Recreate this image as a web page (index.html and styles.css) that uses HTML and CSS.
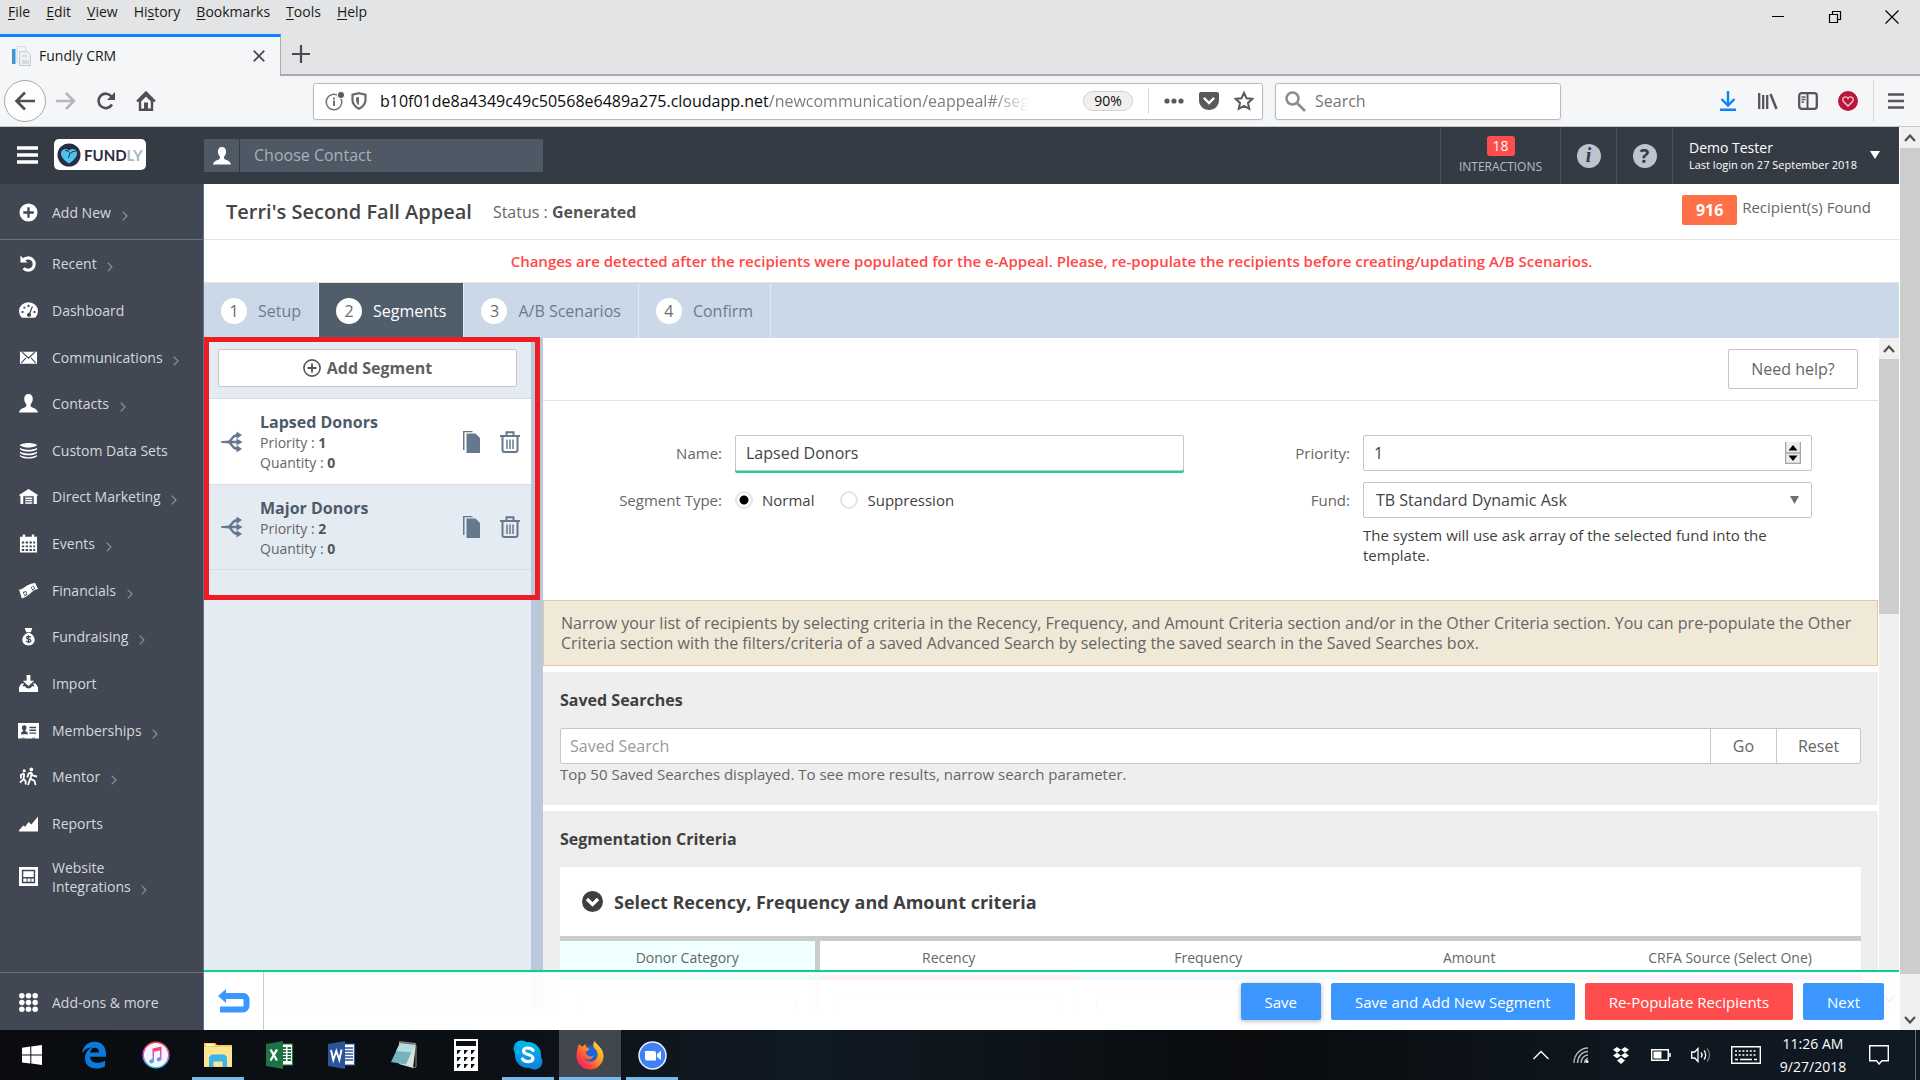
FILE: index.html
```html
<!DOCTYPE html>
<html lang="en">
<head>
<meta charset="utf-8">
<title>Fundly CRM</title>
<meta name="viewport" content="width=device-width, initial-scale=1">
<link rel="stylesheet" href="styles.css">
</head>
<body>
<svg class="sprite" aria-hidden="true">
  <symbol id="i-person" viewBox="0 0 20 20"><path d="M10 0c3 0 4.500 2.200 4.500 5 0 2.600-1 4.300-2 5.600-.4.600-.4 2.200.3 2.800 1.500 1.300 6.200 1.400 7.200 6.100H0c1-4.700 5.700-4.800 7.200-6.100.7-.6.7-2.200.3-2.800-1-1.300-2-3-2-5.600 0-2.800 1.500-5 4.500-5z"/></symbol>
  <symbol id="i-plus-circle" viewBox="0 0 20 20"><path fill-rule="evenodd" d="M10 .5a9.500 9.500 0 1 1 0 19 9.500 9.500 0 0 1 0-19zM8.800 4.500v4.300H4.500v2.400h4.300v4.300h2.400v-4.300h4.300V8.800h-4.300V4.500z"/></symbol>
  <symbol id="i-recent" viewBox="0 0 20 20"><path d="M1.500 1.500v7.500H9z"/><path d="M4.500 6.500a6.500 6.500 0 1 1 .3 8.500" fill="none" stroke="currentColor" stroke-width="3.200"/></symbol>
  <symbol id="i-gauge" viewBox="0 0 20 20"><path fill-rule="evenodd" d="M3 17.500A10 9.500 0 1 1 17 17.500zM9 4v2.200h2V4zM4.700 6v2h2V6zM2.700 10.500v2h2v-2zM15.300 10.500v2h2v-2zM13.500 5.500l-2.700 6.800a2.200 2.200 0 1 0 1.200.5l2.700-6.800z"/></symbol>
  <symbol id="i-mail" viewBox="0 0 20 20"><path fill-rule="evenodd" d="M1 4h18v12.500H1zM2.800 4.800l7.200 6.700 7.200-6.700-.8-.8L10 9.800 3.600 4zM2 15.300l.8.8 5-5.300-.8-.8zM18 15.300l-.8.8-5-5.300.8-.8z"/></symbol>
  <symbol id="i-layers" viewBox="0 0 20 20"><path d="M10 2c4 0 9 1.300 9 2.200S14 7 10 7 1 5.200 1 4.200 6 2 10 2z"/><path d="M1 7c5 3 13 3 18 0v1.700c-3 3.300-15 3.300-18 0zM1 11c5 3 13 3 18 0v1.500c-3 3.300-15 3.300-18 0zM1 14.800c5 3 13 3 18 0V16c-3 3.300-15 3.300-18 0z"/></symbol>
  <symbol id="i-house" viewBox="0 0 20 20"><path fill-rule="evenodd" d="M10 2l10 6.500-1.200 1.200V18H15.500V9.800H4.500V18H1.500V9.700L0 8.500z"/><path d="M6.500 11h7.500v1.500H6.500zM6.500 13.500h7.500V15H6.500zM6.500 16h7.500v1.500H6.500z"/></symbol>
  <symbol id="i-calendar" viewBox="0 0 20 20"><path fill-rule="evenodd" d="M1 3h3V.5h2.500V3h7V.5H16V3h3v16.500H1zM3 8v2h2.500V8zM7 8v2h2.500V8zM11 8v2h2.500V8zM15 8v2h2V8zM3 12v2h2.500v-2zM7 12v2h2.500v-2zM11 12v2h2.500v-2zM15 12v2h2v-2zM3 15.800v2h2.500v-2zM7 15.800v2h2.500v-2zM11 15.800v2h2.500v-2zM15 15.800v2h2v-2z"/></symbol>
  <symbol id="i-cash" viewBox="0 0 20 20"><path fill-rule="evenodd" d="M0 9c5 0 7-6 17-7l3 6.500c-7 1-9 8-17 10zM4 11.500l2 4.500 3-1.800-1.500-3.800zM12.500 6.500L14 10l3-2-1.500-3z"/><circle cx="6.500" cy="13.200" r="1.300"/><circle cx="14.700" cy="7.300" r="1.200"/></symbol>
  <symbol id="i-moneybag" viewBox="0 0 20 20"><path d="M6 1h8l-1.500 4.500h-5zM10 6c4 1 6.500 4 6.500 7.500s-2.500 6-6.500 6-6.500-2.500-6.500-6S6 7 10 6z"/><path d="M12.500 10.800c-1-1.300-4.600-1.200-4.600.6s4.600 1 4.600 2.900-3.600 2-5 .3M10 8.800v8.400" fill="none" stroke="#414753" stroke-width="1.300"/></symbol>
  <symbol id="i-import" viewBox="0 0 20 20"><path d="M8 1h4v6h4l-6 5.500L4 7h4zM2.500 10h3l-2 3h3c.5 3 6.500 3 7 0h3l-2-3h3l2.500 4v5H0v-5z"/></symbol>
  <symbol id="i-idcard" viewBox="0 0 22 20"><path fill-rule="evenodd" d="M0 2h22v16.500H0zM12 6v1.500h7V6zM12 9v1.500h7V9zM12 12v1.500h7V12z"/><path fill="#414753" d="M6.500 4.500c3 0 3 4 1 5.500 0 1.500 3 1 3 4H3c0-3 2.500-2.500 2.500-4-2-1.500-2-5.500 1-5.500zM4 17.500h3v1H4zM15 17.500h3v1h-3z"/></symbol>
  <symbol id="i-runners" viewBox="0 0 20 20"><circle cx="13" cy="2.500" r="2"/><circle cx="5.500" cy="4" r="1.600"/><path d="M13 5.500l-3 1.500-1.200 4M13 6l1.500 3 4.500 1M13 7l-.8 5.500 4 2 1.300 4.500M12 12l-2.500 7M5.500 6.500L2 8.500v3.500M5.500 7l-.7 5.500L7 15v3.500M5 12.500l-4 4" fill="none" stroke="currentColor" stroke-width="1.900"/></symbol>
  <symbol id="i-chart" viewBox="0 0 20 20"><path d="M0 18.500V17l4.500-5 2 1.500 3.500-5 3 2.500L20 2.500v16z"/></symbol>
  <symbol id="i-website" viewBox="0 0 20 20"><path fill-rule="evenodd" d="M0 0h20v20H0zM3 3v14h14V3z"/><path d="M4.500 4.500h11v6h-11zM4.500 12H8v3.500H4.500zM9 12h3v3.500H9zM13 12h2.500v3.500H13z"/></symbol>
  <symbol id="i-grid" viewBox="0 0 20 20"><circle cx="3" cy="3" r="2.900"/><circle cx="10" cy="3" r="2.900"/><circle cx="17" cy="3" r="2.900"/><circle cx="3" cy="10" r="2.900"/><circle cx="10" cy="10" r="2.900"/><circle cx="17" cy="10" r="2.900"/><circle cx="3" cy="17" r="2.900"/><circle cx="10" cy="17" r="2.900"/><circle cx="17" cy="17" r="2.900"/></symbol>
  <symbol id="i-split" viewBox="0 0 22 22"><path d="M0 10.200l8-.7C11 5.500 12 3.800 15.500 3V.500L21 4l-5.500 4V5.700c-2.300.3-3 2-4.700 4h4.700V7.500L21.500 11l-6 3.500v-2.300h-4.700c1.700 2 2.400 3.700 4.700 4V14l5.500 4-5.500 3.500V19C12 18.200 11 16.500 8 12.500l-8-.7z"/></symbol>
  <symbol id="i-copy" viewBox="0 0 18 22"><path d="M0 0h9.500v1.200H1.500V19H0z"/><path d="M3.500 2.500h9L17 7v15H3.500z"/></symbol>
  <symbol id="i-trash" viewBox="0 0 20 22"><path d="M0 5h20M6.500 5V1.200h7V5M2.500 5v14c0 1.200.8 2 2 2h11c1.200 0 2-.8 2-2V5" fill="none" stroke="currentColor" stroke-width="2"/><path d="M7 8.500V18M10 8.500V18M13 8.500V18" stroke="currentColor" stroke-width="1.500"/></symbol>
  <symbol id="i-up" viewBox="0 0 12 8"><path d="M1 7l5-5.500L11 7" fill="none" stroke="#505050" stroke-width="2.200"/></symbol>
  <symbol id="i-down" viewBox="0 0 12 8"><path d="M1 1l5 5.500L11 1" fill="none" stroke="#505050" stroke-width="2.200"/></symbol>
  <symbol id="i-chev" viewBox="0 0 6 10"><path d="M.7.700L5 5 .7 9.300" fill="none" stroke="currentColor" stroke-width="1.200"/></symbol>
</svg>

<header class="browser">
  <div class="menubar">
    <nav class="menus" aria-label="Menu bar">
      <a href="#"><u>F</u>ile</a><a href="#"><u>E</u>dit</a><a href="#"><u>V</u>iew</a><a href="#">Hi<u>s</u>tory</a><a href="#"><u>B</u>ookmarks</a><a href="#"><u>T</u>ools</a><a href="#"><u>H</u>elp</a>
    </nav>
    <div class="winbtns">
      <button type="button" aria-label="Minimize"><svg width="14" height="14" viewBox="0 0 14 14"><path d="M1 6.500h12" stroke="#000"/></svg></button>
      <button type="button" aria-label="Restore"><svg width="14" height="14" viewBox="0 0 14 14"><path d="M1.500 4.500h8v8h-8zM4.500 4.500v-3h8v8h-3" fill="none" stroke="#000" stroke-width="1.200"/></svg></button>
      <button type="button" aria-label="Close"><svg width="14" height="14" viewBox="0 0 14 14"><path d="M.5.500l13 13M13.500.500l-13 13" stroke="#000" stroke-width="1.200"/></svg></button>
    </div>
  </div>
  <div class="tabstrip">
    <div class="tab">
      <svg width="20" height="20" viewBox="0 0 20 20"><path d="M6 .500h9v16H6z" fill="#f3f5f7" stroke="#d3d9de"/><path d="M1 3h3.500v15H1z" fill="#3b96d2"/><path d="M8.500 5.500H16l3.500 3v11h-11z" fill="#eef1f4" stroke="#c3cad2"/><path d="M11 9h5v2h-5zM11 14h7v4h-7z" fill="#d3dae1"/></svg>
      <span class="tab-title">Fundly CRM</span>
      <button type="button" aria-label="Close tab"><svg width="12" height="12" viewBox="0 0 12 12"><path d="M.7.700l10.600 10.600M11.300.700L.7 11.300" stroke="#4a4a4f" stroke-width="1.700"/></svg></button>
    </div>
    <button class="newtab" type="button" aria-label="New tab"><svg width="18" height="18" viewBox="0 0 18 18"><path d="M9 0v18M0 9h18" stroke="#4a4a4f" stroke-width="2.200"/></svg></button>
  </div>
  <div class="navbar">
    <div class="navbtns">
      <button class="back" type="button" aria-label="Back"><svg width="22" height="20" viewBox="0 0 22 20"><path d="M11 1.500L2.500 10l8.500 8.500M2.500 10H21" fill="none" stroke="#4f5054" stroke-width="2.600"/></svg></button>
      <button type="button" aria-label="Forward"><svg width="20" height="18" viewBox="0 0 20 18"><path d="M10 1l8 8-8 8M18 9H0" fill="none" stroke="#b4b6ba" stroke-width="2.600"/></svg></button>
      <button type="button" aria-label="Reload"><svg width="20" height="20" viewBox="0 0 20 20"><path d="M16 13.500A7.200 7.200 0 1 1 15.500 5.500" fill="none" stroke="#4f5054" stroke-width="2.600"/><path d="M19 1v8h-8z" fill="#4f5054"/></svg></button>
      <button type="button" aria-label="Home"><svg width="20" height="20" viewBox="0 0 20 20"><path d="M1 10.500L10 1.500l9 9" fill="none" stroke="#4f5054" stroke-width="2.400"/><path d="M4 10v8.700h12V10l-6-6z" fill="none" stroke="#4f5054" stroke-width="2.400"/><path d="M8 11.500h4V18H8z" fill="#4f5054"/></svg></button>
    </div>
    <div class="urlbar">
      <svg width="20" height="20" viewBox="0 0 20 20"><circle cx="9" cy="11" r="7.800" fill="none" stroke="#737373" stroke-width="1.500"/><path d="M8 9.500h2V15H8zM8 6.500h2v2H8z" fill="#737373"/><circle cx="16" cy="4" r="3.600" fill="#5c5c5c" stroke="#fff"/></svg>
      <svg class="shield" width="16" height="18" viewBox="0 0 16 18"><path d="M8 1.200l6.500 1.500v5c0 4-2.500 7-6.500 9-4-2-6.500-5-6.500-9v-5z" fill="none" stroke="#6a6a6a" stroke-width="2.200"/><path d="M8 5v8.500c-2-1.300-3-3.500-3-6V5.500z" fill="#6a6a6a"/></svg>
      <span class="url">b10f01de8a4349c49c50568e6489a275.cloudapp.net<span class="path">/newcommunication/eappeal#/seg</span></span>
      <span class="zoom">90%</span>
      <span class="sep"></span>
      <svg width="20" height="6" viewBox="0 0 20 6"><g fill="#5a5a5c"><circle cx="3" cy="3" r="2.600"/><circle cx="10" cy="3" r="2.600"/><circle cx="17" cy="3" r="2.600"/></g></svg>
      <svg width="20" height="18" viewBox="0 0 20 18"><path d="M2 0h16a2 2 0 0 1 2 2v6c0 6-4.500 10-10 10S0 14 0 8V2a2 2 0 0 1 2-2z" fill="#5a5a5c"/><path d="M5.500 6.500L10 11l4.500-4.500" fill="none" stroke="#fff" stroke-width="2.400" stroke-linecap="round"/></svg>
      <svg width="20" height="20" viewBox="0 0 20 20"><path d="M10 1.800l2.500 5.400 5.900.7-4.400 4 1.200 5.900L10 14.900l-5.200 2.900L6 11.900l-4.400-4 5.900-.7z" fill="none" stroke="#5a5a5c" stroke-width="2"/></svg>
    </div>
    <label class="searchbar">
      <svg width="21" height="21" viewBox="0 0 21 21"><circle cx="7.500" cy="7.500" r="6" fill="none" stroke="#8c8c8c" stroke-width="2.500"/><path d="M12 12l8 8" stroke="#8c8c8c" stroke-width="2.700"/></svg>
      <input type="search" placeholder="Search" aria-label="Search the web">
    </label>
    <div class="tools">
      <svg width="20" height="20" viewBox="-2 0 20 20"><path d="M8 0v14M1.500 8L8 14.500 14.500 8M0 18.700h16" fill="none" stroke="#0a84ff" stroke-width="2.400"/></svg>
      <svg width="20" height="18" viewBox="0 0 20 18"><path d="M1.200 1v16M5.200 3v14M9.200 3v14" stroke="#55565a" stroke-width="2.300"/><path d="M12.500 2l6 15" stroke="#55565a" stroke-width="2.500"/></svg>
      <svg width="20" height="18" viewBox="0 0 20 18"><rect x="1.200" y="1.200" width="17.600" height="15.600" rx="2.500" fill="none" stroke="#55565a" stroke-width="2.300"/><path d="M9.500 1v16" stroke="#55565a" stroke-width="2"/><path d="M3.500 5h4M3.500 7.500h4M3.500 10h2.500" stroke="#55565a" stroke-width="1.300"/></svg>
      <svg width="20" height="20" viewBox="0 0 20 20"><circle cx="10" cy="10" r="10" fill="#b9163c"/><path d="M10 15L5.500 10.500C3.800 8.500 5.200 5.900 7.500 5.900c1.200 0 2 .6 2.500 1.600.5-1 1.300-1.600 2.500-1.600 2.300 0 3.700 2.600 2 4.600z" fill="none" stroke="#f6c9d3" stroke-width="1.400"/></svg>
      <span class="sep"></span>
      <svg width="16" height="16" viewBox="0 0 16 16"><path d="M0 1.500h16M0 8h16M0 14.500h16" stroke="#55565a" stroke-width="2.400"/></svg>
    </div>
  </div>
</header>

<div class="viewport">
<div class="app">
  <header class="topbar">
    <div class="brand">
      <button type="button" aria-label="Toggle menu"><svg width="21" height="18" viewBox="0 0 21 18"><path d="M0 2h21M0 9h21M0 16h21" stroke="#fff" stroke-width="3.600"/></svg></button>
      <a class="logo" href="#"><svg width="24" height="24" viewBox="0 0 24 24"><circle cx="12" cy="12" r="11.500" fill="#2a2d42"/><path d="M12 20.500C7.500 17.500 4 14.200 4 10.200c0-4 5-5.800 8-2.700 3-3.100 8-1.300 8 2.700 0 4-3.500 7.300-8 10.300z" fill="#4cc3e8"/><path d="M18.500 8.500c-3.500-.5-6.500 2-7 6.500M8 7.500c3 0 4.500 1.500 5 3" fill="none" stroke="#2a2d42" stroke-width="1"/></svg><span>FUND<i>LY</i></span></a>
    </div>
    <div class="contact">
      <span class="contact-icon"><svg width="18" height="18"><use href="#i-person"/></svg></span>
      <input type="text" placeholder="Choose Contact" aria-label="Choose Contact">
    </div>
    <div class="account">
      <a class="interactions" href="#"><b>18</b>INTERACTIONS</a>
      <a class="round" href="#" aria-label="Information"><span class="ital">i</span></a>
      <a class="round" href="#" aria-label="Help"><span>?</span></a>
      <button class="user" type="button"><span><span class="who">Demo Tester</span><span class="login">Last login on 27 September 2018</span></span><svg width="10" height="8" viewBox="0 0 10 8"><path d="M0 0h10L5 8z" fill="#fff"/></svg></button>
    </div>
  </header>

  <div class="body">
    <aside class="sidebar">
      <a class="side first" href="#"><svg><use href="#i-plus-circle"/></svg><span>Add New <svg class="chev"><use href="#i-chev"/></svg></span></a>
      <nav class="sidenav" aria-label="Main">
        <a class="side" href="#"><svg><use href="#i-recent"/></svg><span>Recent <svg class="chev"><use href="#i-chev"/></svg></span></a>
        <a class="side" href="#"><svg><use href="#i-gauge"/></svg><span>Dashboard</span></a>
        <a class="side" href="#"><svg><use href="#i-mail"/></svg><span>Communications <svg class="chev"><use href="#i-chev"/></svg></span></a>
        <a class="side" href="#"><svg><use href="#i-person"/></svg><span>Contacts <svg class="chev"><use href="#i-chev"/></svg></span></a>
        <a class="side" href="#"><svg><use href="#i-layers"/></svg><span>Custom Data Sets</span></a>
        <a class="side" href="#"><svg><use href="#i-house"/></svg><span>Direct Marketing <svg class="chev"><use href="#i-chev"/></svg></span></a>
        <a class="side" href="#"><svg><use href="#i-calendar"/></svg><span>Events <svg class="chev"><use href="#i-chev"/></svg></span></a>
        <a class="side" href="#"><svg><use href="#i-cash"/></svg><span>Financials <svg class="chev"><use href="#i-chev"/></svg></span></a>
        <a class="side" href="#"><svg><use href="#i-moneybag"/></svg><span>Fundraising <svg class="chev"><use href="#i-chev"/></svg></span></a>
        <a class="side" href="#"><svg><use href="#i-import"/></svg><span>Import</span></a>
        <a class="side" href="#"><svg><use href="#i-idcard"/></svg><span>Memberships <svg class="chev"><use href="#i-chev"/></svg></span></a>
        <a class="side" href="#"><svg><use href="#i-runners"/></svg><span>Mentor <svg class="chev"><use href="#i-chev"/></svg></span></a>
        <a class="side" href="#"><svg><use href="#i-chart"/></svg><span>Reports</span></a>
        <a class="side" href="#"><svg><use href="#i-website"/></svg><span>Website<br>Integrations <svg class="chev"><use href="#i-chev"/></svg></span></a>
      </nav>
      <a class="side addons" href="#"><svg><use href="#i-grid"/></svg><span>Add-ons &amp; more</span></a>
    </aside>

    <main class="main">
      <div class="titlebar">
        <h1>Terri's Second Fall Appeal</h1>
        <p class="status">Status : <b>Generated</b></p>
        <p class="found"><b>916</b><span>Recipient(s) Found</span></p>
      </div>
      <p class="alert">Changes are detected after the recipients were populated for the e-Appeal. Please, re-populate the recipients before creating/updating A/B Scenarios.</p>
      <nav class="steps" aria-label="Steps">
        <a href="#"><b>1</b>Setup</a>
        <a class="active" href="#"><b>2</b>Segments</a>
        <a href="#"><b>3</b>A/B Scenarios</a>
        <a href="#"><b>4</b>Confirm</a>
      </nav>

      <div class="workspace">
        <section class="segments" aria-label="Segments">
          <div class="addwrap"><button class="add" type="button"><svg width="18" height="18" viewBox="0 0 18 18"><circle cx="9" cy="9" r="8.100" fill="none" stroke="#555" stroke-width="1.600"/><path d="M9 4.500v9M4.500 9h9" stroke="#555" stroke-width="1.800"/></svg>Add Segment</button></div>
          <article class="segment current">
            <svg width="22" height="22"><use href="#i-split"/></svg>
            <div class="seginfo"><h2>Lapsed Donors</h2><p>Priority : <b>1</b></p><p>Quantity : <b>0</b></p></div>
            <button type="button" aria-label="Copy Lapsed Donors"><svg width="18" height="22"><use href="#i-copy"/></svg></button>
            <button type="button" aria-label="Delete Lapsed Donors"><svg width="20" height="22"><use href="#i-trash"/></svg></button>
          </article>
          <article class="segment">
            <svg width="22" height="22"><use href="#i-split"/></svg>
            <div class="seginfo"><h2>Major Donors</h2><p>Priority : <b>2</b></p><p>Quantity : <b>0</b></p></div>
            <button type="button" aria-label="Copy Major Donors"><svg width="18" height="22"><use href="#i-copy"/></svg></button>
            <button type="button" aria-label="Delete Major Donors"><svg width="20" height="22"><use href="#i-trash"/></svg></button>
          </article>
          <div class="callout"></div>
        </section>

        <section class="detail" aria-label="Segment details">
          <div class="helprow"><button type="button" class="plain">Need help?</button></div>
          <form class="form">
            <div class="col">
              <label for="name">Name:</label>
              <input class="field focus" id="name" type="text" value="Lapsed Donors">
              <span class="lbl" id="type">Segment Type:</span>
              <div class="radios" role="radiogroup" aria-labelledby="type">
                <label><input type="radio" name="type" checked>Normal</label>
                <label><input type="radio" name="type">Suppression</label>
              </div>
            </div>
            <div class="col">
              <label for="priority">Priority:</label>
              <div class="field number"><input id="priority" type="text" inputmode="numeric" value="1"><svg width="16" height="22" viewBox="0 0 16 22"><path d="M0 0h16v22H0z" fill="#ececec"/><path d="M15.500 0v21.500H.500M0 11h16M.500 0v22" fill="none" stroke="#a6a6a6" stroke-width="1.500"/><path d="M3.500 8.500L8 3l4.500 5.500zM3.500 13.500h9L8 19z" fill="#000"/></svg></div>
              <label for="fund">Fund:</label>
              <div class="field select"><select id="fund"><option>TB Standard Dynamic Ask</option></select><svg width="9" height="8" viewBox="0 0 9 8"><path d="M0 0h9L4.500 8z" fill="#6f6f6f"/></svg></div>
              <p class="note">The system will use ask array of the selected fund into the template.</p>
            </div>
          </form>
          <p class="banner">Narrow your list of recipients by selecting criteria in the Recency, Frequency, and Amount Criteria section and/or in the Other Criteria section. You can pre-populate the Other Criteria section with the filters/criteria of a saved Advanced Search by selecting the saved search in the Saved Searches box.</p>
          <section class="block">
            <h3>Saved Searches</h3>
            <div class="searchrow"><input type="text" placeholder="Saved Search" aria-label="Saved Search"><button type="button">Go</button><button type="button">Reset</button></div>
            <p>Top 50 Saved Searches displayed. To see more results, narrow search parameter.</p>
          </section>
          <section class="block grow">
            <h3>Segmentation Criteria</h3>
            <div class="card">
              <h4><svg width="21" height="21" viewBox="0 0 21 21"><circle cx="10.500" cy="10.500" r="10.500" fill="#3f3f3f"/><path d="M5 8l5.500 5.500L16 8" fill="none" stroke="#fff" stroke-width="3.200"/></svg>Select Recency, Frequency and Amount criteria</h4>
              <table>
                <colgroup><col class="c-donor"><col><col><col><col></colgroup>
                <thead><tr><th class="k1">Donor Category</th><th class="k2">Recency</th><th class="k3">Frequency</th><th class="k4">Amount</th><th class="k5">CRFA Source (Select One)</th></tr></thead>
                <tbody><tr><td class="k1"><input type="text" aria-label="Donor Category filter"></td><td><input type="text" aria-label="Recency filter"></td><td><input type="text" aria-label="Frequency filter"></td><td><input type="text" aria-label="Amount filter"></td><td><input type="text" aria-label="Source filter"></td></tr></tbody>
              </table>
            </div>
          </section>
        </section>

        <div class="scroll" aria-hidden="true"><span><svg width="12" height="8"><use href="#i-up"/></svg></span><i class="thumb"></i><span class="end"><svg width="12" height="8"><use href="#i-down"/></svg></span></div>
      </div>

      <footer class="actions">
        <button class="return" type="button" aria-label="Back to list"><svg width="32" height="24" viewBox="0 0 32 24"><path d="M8 7h16.500a4 4 0 0 1 4 3v7a3.500 3.500 0 0 1-3.500 3.500H2" fill="none" stroke="#3b97fe" stroke-width="6"/><path d="M0 7l8-7v14z" fill="#3b97fe"/></svg></button>
        <div class="btns">
          <button class="raised" type="button">Save</button>
          <button type="button">Save and Add New Segment</button>
          <button class="danger" type="button">Re-Populate Recipients</button>
          <button type="button">Next</button>
        </div>
      </footer>
    </main>
  </div>
</div>
<div class="scroll outer" aria-hidden="true"><span><svg width="12" height="8"><use href="#i-up"/></svg></span><i class="thumb"></i><span class="end"><svg width="12" height="8"><use href="#i-down"/></svg></span></div>
</div>

<footer class="taskbar">
  <div class="apps">
    <button type="button" aria-label="Start"><svg width="20" height="20" viewBox="0 0 20 20"><path d="M0 2.800L8.300 1.600v8H0zM9.300 1.500L20 0v9.600H9.300zM0 10.600h8.300v8L0 17.400zM9.300 10.600H20V20L9.300 18.600z" fill="#fff"/></svg></button>
    <button type="button" aria-label="Edge"><svg width="26" height="28" viewBox="0 0 26 28"><path d="M1 12.500C2 5 7 .800 13.500.800c7 0 11.500 4.500 11.500 12v3H9c.3 4 3.500 6 7.500 6 3 0 5.500-.8 7.500-2v5.500c-2 1.300-5 2.200-8.500 2.200C8.500 27.500 4 23.500 4 17c0-4.500 2.500-8.500 6.800-10.600C6 6.500 3 9 1 12.500zM9.200 11.500h8.800c0-3-1.300-4.800-4.200-4.800-2.600 0-4.200 2-4.600 4.800z" fill="#0a7bdc"/></svg></button>
    <button type="button" aria-label="iTunes"><svg width="28" height="28" viewBox="0 0 28 28"><defs><linearGradient id="it" x1="0" y1="0" x2="0" y2="1"><stop offset="0" stop-color="#fb3f4e"/><stop offset=".5" stop-color="#c45bdb"/><stop offset="1" stop-color="#35c1f1"/></linearGradient></defs><circle cx="14" cy="14" r="12.800" fill="#f7f5fa" stroke="url(#it)" stroke-width="1.600"/><path d="M10.500 7.500l9-2v12.300c0 3.200-4.800 3.600-4.800.7 0-2 2-2.400 3.300-2.600V9.500l-6 1.300v9c0 3.200-4.800 3.600-4.800.7 0-2 2-2.400 3.300-2.600z" fill="url(#it)"/></svg></button>
    <button class="open" type="button" aria-label="File Explorer"><svg width="28" height="26" viewBox="0 0 28 26"><path d="M0 1h11l2 2h15v22H0z" fill="#f7cf57"/><path d="M0 5h28v19.500H0z" fill="#fde596"/><path d="M2 2h8v2H2z" fill="#fff4cc"/><path d="M5 25V15l2.500-2.500h13L23 15v10h-4.500v-5.500h-9V25z" fill="#3db5e6"/></svg></button>
    <button type="button" aria-label="Excel"><svg width="28" height="28" viewBox="0 0 28 28"><path d="M15 3h11.500v21H15z" fill="#fff" stroke="#1f7244" stroke-width="1.200"/><path d="M17 7h3M21.500 7H25M17 10h3M21.500 10H25M17 13h3M21.500 13H25M17 16h3M21.500 16H25M17 19h3M21.500 19H25" stroke="#1f7244" stroke-width="1.800"/><path d="M0 3L17 0v28L0 25z" fill="#1f7244"/><path d="M4.500 8.500l6.500 11M11 8.500l-6.500 11" stroke="#fff" stroke-width="2.200"/></svg></button>
    <button type="button" aria-label="Word"><svg width="28" height="28" viewBox="0 0 28 28"><path d="M15 3h11.500v21H15z" fill="#fff" stroke="#2a5699" stroke-width="1.200"/><path d="M17 7h8M17 10h8M17 13h8M17 16h8M17 19h8" stroke="#2a5699" stroke-width="1.600"/><path d="M0 3L17 0v28L0 25z" fill="#2a5699"/><path d="M3 9l2.300 10L8.300 10l3 9 2.300-10.500" fill="none" stroke="#fff" stroke-width="1.900"/></svg></button>
    <button type="button" aria-label="Notepad"><svg width="28" height="28" viewBox="0 0 28 28"><path d="M9 1l17 2-3 24-14-4z" fill="#d8e2e4"/><path d="M10 2l15 1.500-9 20L1 21z" fill="#75b4bf"/><path d="M10 2l15 1.500-3 8L6 10z" fill="#b5dce0"/><path d="M9 1l17 2" stroke="#777" stroke-width="2"/><path d="M26 4v22l-4 1" fill="none" stroke="#a88c58"/></svg></button>
    <button type="button" aria-label="Calculator"><svg width="24" height="32" viewBox="0 0 24 32"><path d="M0 0h24v32H0z" fill="#fff"/><path d="M2 2h20v5H2zM3 11h4l-3 4H3zM10 11h4l-3 4h-1zM17 11h4l-3 4h-1zM3 18h4l-3 4H3zM10 18h4l-3 4h-1zM17 18h4l-3 4h-1zM3 25h4l-3 4H3zM10 25h4l-3 4h-1zM17 25h4l-3 4h-1z" fill="#0c1015"/></svg></button>
    <button class="open" type="button" aria-label="Skype"><svg width="30" height="30" viewBox="0 0 30 30"><defs><linearGradient id="sk" x1="0" y1="0" x2="0" y2="1"><stop offset="0" stop-color="#00b9f2"/><stop offset="1" stop-color="#0a84dd"/></linearGradient></defs><circle cx="8.500" cy="8.500" r="8" fill="url(#sk)"/><circle cx="21.500" cy="21.500" r="8" fill="#0a84dd"/><circle cx="15" cy="15" r="13" fill="url(#sk)"/><path d="M20 10.300c-2-3-9.500-3.300-9.500.7 0 4.500 9.500 2.500 9.500 7.300 0 4.400-8.500 4.200-10.500.7" fill="none" stroke="#fff" stroke-width="3.200" stroke-linecap="round"/></svg></button>
    <button class="open on" type="button" aria-label="Firefox"><svg width="28" height="29" viewBox="0 0 28 29"><defs><linearGradient id="fx" x1="1" y1="0" x2="0" y2="1"><stop offset="0" stop-color="#fff04a"/><stop offset=".4" stop-color="#ff9a1a"/><stop offset=".75" stop-color="#ff3647"/><stop offset="1" stop-color="#e31587"/></linearGradient></defs><circle cx="14" cy="14" r="9.500" fill="#1f62d8"/><path d="M3 3c1 1 2 2 3.500 2.500L9.500 3c0 2 1 4 4 5-1 1.500-3 2-4 3 1 4 4 5.500 8 3.500-1 4-6.500 5.500-10 2 2 5 11 6 13.500 0 2-5-1-7.500-2.500-9C16.500 5 17 2.500 18.500 0c1.500 3 9 7 9 15 0 7.500-6 13.500-13.500 13.500S.500 22.500.500 15C.500 10.500 1.500 6.500 3 3z" fill="url(#fx)"/></svg></button>
    <button class="open" type="button" aria-label="Zoom"><svg width="29" height="29" viewBox="0 0 29 29"><circle cx="14.500" cy="14.500" r="13.500" fill="#3f80f7" stroke="#eaf2ff" stroke-width="1.500"/><path d="M7 10h9a2 2 0 0 1 2 2v7.500H9a2 2 0 0 1-2-2zM19 13l4-3v9l-4-3z" fill="#fff"/></svg></button>
  </div>
  <div class="tray">
    <svg width="16" height="10" viewBox="0 0 16 10"><path d="M.5 9L8 1.500 15.500 9" fill="none" stroke="#fff" stroke-width="1.400"/></svg>
    <svg width="16" height="16" viewBox="0 0 16 16"><g fill="none" stroke="#b9bdc2" stroke-width="1.300"><path d="M1 16C1 8 7 1 15 1M4.500 16C4.500 10 9 4.500 15 4.500M8 16c0-4 3-8 7-8M11.500 16c0-2 1.500-4.500 3.500-4.500"/></g><circle cx="14" cy="14.500" r="1.500" fill="#fff"/></svg>
    <svg width="18" height="17" viewBox="0 0 18 17"><path d="M5 0l4 2.800-4 2.900L1 2.800zM13 0l4 2.800-4 2.900-4-2.900zM5 5.700l4 2.800-4 2.800-4-2.800zM13 5.700l4 2.800-4 2.800-4-2.800zM9 10.500l4 2.900L9 17l-4-3.600z" fill="#fff"/></svg>
    <svg width="20" height="12" viewBox="0 0 20 12"><path d="M.700.700h16.600v10.600H.700zM19 4v4" fill="none" stroke="#fff" stroke-width="1.500"/><path d="M2.500 2.500h8v7h-8z" fill="#fff"/></svg>
    <svg width="20" height="16" viewBox="0 0 20 16"><path d="M.7 5h3L7 1.500v13L3.700 11h-3z" fill="none" stroke="#fff" stroke-width="1.300"/><path d="M10 5.500c1.300 1.500 1.300 3.500 0 5M13 3.500c2.200 2.500 2.200 6.500 0 9" fill="none" stroke="#fff" stroke-width="1.300"/><path d="M16 1.500c3.300 3.500 3.300 9.500 0 13" fill="none" stroke="#777" stroke-width="1.300"/></svg>
    <svg width="30" height="18" viewBox="0 0 30 18"><path d="M.7.700h28.600v16.600H.700z" fill="none" stroke="#fff" stroke-width="1.400"/><path d="M4 5h22M4 9h22" stroke="#fff" stroke-width="1.600" stroke-dasharray="2 1.700"/><path d="M4 13.500h3M9 13.500h12M23 13.500h3" stroke="#fff" stroke-width="1.500"/></svg>
    <div class="clock"><span>11:26 AM</span><span>9/27/2018</span></div>
    <svg width="20" height="20" viewBox="0 0 20 20"><path d="M.7.700h18.600v15H13L10 19l-2.500-3.300H.700z" fill="none" stroke="#fff" stroke-width="1.400"/></svg>
    <button class="desktop" type="button" aria-label="Show desktop"></button>
  </div>
</footer>
</body>
</html>
```
FILE: styles.css
```css
* { box-sizing: border-box; }
html, body { margin: 0; height: 100%; }
body {
  display: flex;
  flex-direction: column;
  min-height: 100vh;
  overflow: hidden;
  background: #fff;
  color: #3f3f3f;
  font: 15px/20px "Open Sans", "Noto Sans", sans-serif;
}
h1, h2, h3, h4, p { margin: 0; }
a { color: inherit; text-decoration: none; }
button, input, select { font: inherit; color: inherit; margin: 0; padding: 0; border: 0; background: none; border-radius: 0; }
button { display: inline-flex; align-items: center; justify-content: center; cursor: pointer; }
input, select { outline: 0; min-width: 0; }
input::placeholder { color: #9a9a9a; opacity: 1; }
svg { display: block; flex: none; fill: currentColor; }
.sprite { position: absolute; width: 0; height: 0; }

/* Browser window */
.browser { flex: none; background: #f5f6f7; font-size: 14px; color: #1a1a1a; border-bottom: 1px solid #c4c7ca; }
.menubar { display: flex; justify-content: space-between; height: 34px; background: #e3e4e6; }
.menus { display: flex; gap: 16px; padding: 2px 8px; }
.menus u { text-underline-offset: 2px; }
.winbtns { display: flex; }
.winbtns button { width: 57px; }
.tabstrip { display: flex; height: 42px; background: #e3e4e6; box-shadow: inset 0 -2px #a9abae; }
.tab { display: flex; align-items: center; gap: 8px; width: 281px; padding: 0 15px 2px 11px; background: #f5f6f7; border-top: 3px solid #0a84ff; border-right: 1px solid #a9abae; }
.tab-title { flex: 1; }
.newtab { width: 40px; padding-bottom: 3px; }
.navbar { display: flex; align-items: center; height: 50px; padding: 0 16px 0 4px; }
.navbtns { display: flex; align-items: center; width: 309px; }
.navbtns button { width: 40px; height: 42px; }
.navbtns .back { width: 42px; border: 1px solid #a7a9ac; border-radius: 50%; background: #fdfdfd; }
.urlbar { display: flex; align-items: center; flex: 1; gap: 15px; height: 37px; padding: 0 8px 0 11px; background: #fff; border: 1px solid #b9bbbe; border-radius: 3px; color: #0c0c0d; font-size: 16px; box-shadow: 0 1px 4px rgba(0, 0, 0, .05); }
.urlbar .shield { margin-left: -9px; }
.url { flex: 1; min-width: 0; overflow: hidden; white-space: nowrap; margin-left: -2px; }
.url .path { color: #7d7d7d; -webkit-mask-image: linear-gradient(90deg, #000 86%, transparent); mask-image: linear-gradient(90deg, #000 86%, transparent); }
.zoom { width: 50px; line-height: 18px; border: 1px solid #d1d1d3; border-radius: 10px; background: #f0f0f1; text-align: center; font-size: 14px; }
.urlbar .sep { width: 1px; height: 26px; background: #d7d7db; }
.searchbar { display: flex; align-items: center; gap: 9px; width: 286px; height: 37px; margin-left: 12px; padding: 0 9px; background: #fff; border: 1px solid #b9bbbe; border-radius: 3px; font-size: 16px; box-shadow: 0 1px 4px rgba(0, 0, 0, .05); }
.searchbar input { flex: 1; }
.searchbar input::placeholder { color: #757575; }
.tools { display: flex; align-items: center; gap: 20px; margin-left: 157px; }
.tools .sep { width: 1px; height: 42px; margin: 0 -6px 0 -5px; background: #d7d7db; }

/* Page viewport and scrollbars */
.viewport { display: flex; flex: 1; min-height: 0; }
.app { display: flex; flex-direction: column; flex: 1; min-width: 0; }
.scroll { display: flex; flex-direction: column; flex: none; width: 21px; background: #f0f0f0; border-left: 1px solid #fff; }
.scroll span { display: flex; align-items: center; justify-content: center; height: 21px; }
.scroll .thumb { flex: 0 0 38%; background: #cdcdcd; }
.scroll .end { margin-top: auto; }
.outer .thumb { flex-basis: calc(100% - 77px); }

/* App header */
.topbar { display: flex; align-items: center; flex: none; height: 57px; background: #353b45; color: #fff; }
.brand { display: flex; align-items: center; gap: 16px; width: 204px; padding: 0 17px 2px; }
.logo { display: flex; align-items: center; gap: 3px; width: 92px; height: 31px; padding-left: 3px; background: #fff; border-radius: 5px; color: #2a2d42; font: 700 15px/20px "Lato", sans-serif; }
.logo i { font-style: normal; color: #aab7bd; }
.contact { display: flex; width: 339px; height: 33px; gap: 1px; }
.contact-icon { display: flex; align-items: center; justify-content: center; width: 35px; background: #4e5965; }
.contact input { flex: 1; padding: 0 14px 2px; background: #4e5965; font-size: 16px; }
.contact input::placeholder { color: #a9b0b8; }
.account { display: flex; align-self: stretch; margin-left: auto; }
.account > * { border-left: 1px solid #4a525f; }
.interactions { display: flex; flex-direction: column; gap: 1px; align-items: center; width: 120px; padding-top: 9px; color: #b5bbc4; font-size: 12px; }
.interactions b { width: 28px; background: #ff4d4d; border-radius: 3px; color: #fff; font-size: 14px; font-weight: 400; text-align: center; }
.round { display: flex; align-items: center; justify-content: center; width: 56px; color: #353b45; }
.round span { width: 24px; height: 24px; border-radius: 50%; background: #bcc4cd; text-align: center; font: 700 20px/24px "Open Sans", sans-serif; }
.round .ital { font: italic 700 20px/23px "Liberation Serif", serif; }
.user { justify-content: space-between; width: 227px; padding: 0 19px 1px 16px; text-align: left; }
.user > span > span { display: block; }
.who { font-size: 14px; }
.login { font-size: 11px; line-height: 14px; }

/* Sidebar */
.body { display: flex; flex: 1; min-height: 0; }
.sidebar { display: flex; flex-direction: column; flex: none; width: 204px; background: #414753; border-right: 1px solid #64708a; color: #d5d8dd; font-size: 14px; line-height: 19px; }
.side { display: flex; align-items: center; gap: 13px; padding: 1px 0 0 18px; min-height: 0; }
.side > svg { width: 21px; height: 19px; color: #fff; }
.side .chev { display: inline-block; width: 6px; height: 10px; margin-left: 7px; vertical-align: -3px; color: #8c929d; }
.side.first { height: 56px; border-bottom: 1px solid #68748a; }
.sidenav { display: grid; grid-template-rows: repeat(13, 7fr) 9fr; flex: 1; min-height: 0; padding-bottom: 66px; }
.side.addons { height: 58px; border-top: 1px solid #68748a; }

/* Title, alert and steps */
.main { position: relative; display: flex; flex-direction: column; flex: 1; min-width: 0; }
.titlebar { display: flex; align-items: center; gap: 21px; flex: none; height: 56px; padding: 0 28px 0 22px; border-bottom: 1px solid #e2e2e2; }
.titlebar h1 { font-size: 20px; font-weight: 600; line-height: 28px; color: #444; }
.status { color: #666; font-size: 16px; }
.status b { color: #555; }
.found { display: flex; gap: 5px; margin-left: auto; align-items: flex-start; padding-bottom: 4px; color: #666; }
.found b { width: 55px; border-radius: 2px; background: #ff7048; color: #fff; font-size: 16px; line-height: 30px; text-align: center; }
.found span { line-height: 25px; }
.alert { flex: none; padding: 11px 0; border-bottom: 1px solid #e2e2e2; color: #ff4747; font-weight: 600; text-align: center; line-height: 20px; }
.steps { display: flex; flex: none; height: 55px; background: #cbd8e8; color: #6d7b8e; font-size: 16px; }
.steps a { display: flex; align-items: center; gap: 11px; padding: 0 17px; border-right: 1px solid #e3eaf2; }
.steps b { width: 26px; height: 26px; border-radius: 50%; background: #fff; color: #6b6b6b; font-weight: 400; line-height: 26px; text-align: center; }
.steps .active { background: #505d6a; color: #fff; }

/* Workspace */
.workspace { display: flex; flex: 1; min-height: 0; margin-bottom: 21px; }
.segments { position: relative; flex: none; width: 339px; background: #e4ebf3; border-right: 12px solid #bac8db; }
.addwrap { padding: 11px 14px; }
.add { gap: 6px; width: 100%; height: 38px; background: #fff; border: 1px solid #c6c6c6; border-radius: 2px; color: #5f5f5f; font-size: 16px; font-weight: 700; }
.segment { display: flex; align-items: center; height: 86px; padding: 0 11px 0 17px; border-top: 1px solid #d3deea; color: #66788d; }
.segment + .segment { border-bottom: 1px solid #d3deea; }
.segment.current { background: #fff; }
.segment > button { margin-left: 19px; }
.seginfo { flex: 1; padding: 1px 0 0 17px; color: #666; font-size: 14px; }
.seginfo h2 { color: #4d5a68; font-size: 16px; line-height: 22px; }
.seginfo b { color: #555; }
.callout { position: absolute; top: -1px; left: 0; right: -9px; height: 263px; border: 5px solid #ee1c25; }
.detail { flex: 1; min-width: 0; overflow: hidden; display: flex; flex-direction: column; }
.helprow { display: flex; justify-content: flex-end; flex: none; padding: 11px 20px; border-bottom: 1px solid #e2e2e2; }
.plain { width: 130px; height: 40px; border: 1px solid #c4c4c4; border-radius: 2px; color: #666; font-size: 16px; }
.form { display: grid; grid-template-columns: 1fr 1fr; gap: 51px; flex: none; height: 199px; padding: 34px 66px 0 64px; }
.col { display: grid; grid-template-columns: 115px minmax(0, 1fr); grid-auto-rows: minmax(36px, auto); gap: 11px 13px; align-content: start; align-items: center; }
.col > label, .lbl { color: #666; text-align: right; white-space: nowrap; }
.field { width: 100%; height: 36px; padding: 0 10px; border: 1px solid #c6c6c6; border-radius: 2px; background: #fff; color: #444; font-size: 16px; }
.focus { box-shadow: 0 2px #16d68c; }
.number, .select { display: flex; align-items: center; }
.number input, .select select { flex: 1; width: 100%; }
.select { padding: 0 12px; }
.select select { appearance: none; }
.radios { display: flex; gap: 26px; }
.radios label { display: flex; align-items: center; gap: 9px; white-space: nowrap; }
.radios input { appearance: none; width: 18px; height: 18px; border: 2px solid #e4e4e4; border-radius: 50%; background: #fff; }
.radios input:checked { background: radial-gradient(circle, #000 4px, #fff 5px); }
.note { grid-column: 2; width: 410px; max-width: 100%; margin-top: -4px; }
.banner { flex: none; padding: 12px 17px; border: 1px solid #dfcb9b; background: #f1e9d7; color: #666; font-size: 16px; line-height: 20px; }
.block { flex: none; margin-top: 6px; padding: 18px 17px 21px; background: #eee; color: #666; }
.block h3 { color: #3f3f3f; font-size: 16px; line-height: 20px; padding-bottom: 18px; }
.block.grow { flex: 1; min-height: 0; padding-bottom: 0; }
.searchrow { display: flex; height: 36px; border: 1px solid #c4c7ca; border-radius: 2px; background: #fff; font-size: 16px; }
.searchrow input { flex: 1; padding: 0 9px; }
.searchrow button { width: 66px; border-left: 1px solid #c9c9c9; }
.searchrow button + button { width: 84px; }
.card { background: #fff; }
.card h4 { display: flex; align-items: center; gap: 11px; height: 74px; padding: 0 22px; border-bottom: 5px solid #cbcbcb; color: #3f3f3f; font-size: 18px; }
table { width: 100%; table-layout: fixed; border-collapse: collapse; font-size: 14px; }
.c-donor { width: 257px; }
th { height: 36px; padding: 0; border-bottom: 5px solid; font-weight: 400; line-height: 19px; }
th.k1, td.k1 { border-right: 5px solid #cbcbcb; }
th.k1 { background: #f0ffff; border-bottom-color: #16d68c; }
th.k2 { border-bottom-color: #ff4d4d; }
th.k3 { border-bottom-color: #3b97fe; }
th.k4 { border-bottom-color: #ff7048; }
th.k5 { border-bottom-color: #9a5bfe; }
td { padding: 18px 18px 0; border-right: 1px solid #ddd; }
td input { width: 100%; height: 37px; border: 1px solid #c6c6c6; }

/* Action bar lying over the foot of the workspace */
.actions { position: absolute; left: 0; right: 0; bottom: 0; display: flex; height: 60px; border-top: 2px solid #08d28a; background: rgba(255, 255, 255, .93); }
.return { width: 60px; border-right: 1px solid #ccc; background: #fff; }
.btns { display: flex; gap: 10px; margin: 11px 15px 0 auto; }
.btns button { height: 37px; padding: 0 24px; border-radius: 2px; background: #3b97fe; color: #fff; white-space: nowrap; }
.btns .danger { background: #ff4d4d; }
.btns .raised { box-shadow: 0 1px 5px rgba(0, 0, 0, .3); }

/* Taskbar */
.taskbar { display: flex; justify-content: space-between; flex: none; height: 50px; background: linear-gradient(90deg, #0a0c0f, #0b1015 25%, #101a24 42%, #090b0d 65%, #0f1720 85%, #101a24); color: #fff; font-size: 14px; }
.apps { display: flex; padding-left: 1px; }
.apps button { width: 62px; }
.open { background: linear-gradient(#76b9ed, #76b9ed) bottom / 52px 3px no-repeat; }
.apps .on { background: linear-gradient(#76b9ed, #76b9ed) bottom / 100% 3px no-repeat, #41474c; }
.tray { display: flex; align-items: center; gap: 20px; }
.tray > svg { min-width: 20px; }
.clock { display: flex; flex-direction: column; width: 72px; margin-left: -4px; text-align: center; line-height: 23px; }
.desktop { align-self: stretch; width: 5px; margin-left: 6px; border-left: 1px solid #6a7075; }
```
